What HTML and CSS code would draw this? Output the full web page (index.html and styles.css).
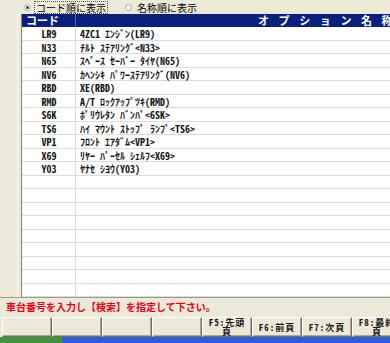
FILE: index.html
```html
<!DOCTYPE html>
<html lang="ja">
<head>
    <meta charset="UTF-8">
    <title>オプション一覧</title>
    <link rel="stylesheet" href="styles.css">
</head>
<body>
    <div class="app">
        <div class="options">
            <label class="radio">
                <span class="radio-dot checked"></span>
                <span class="radio-text focus">コード順に表示</span>
            </label>
            <label class="radio">
                <span class="radio-dot"></span>
                <span class="radio-text">名称順に表示</span>
            </label>
        </div>

        <div class="main">
            <div class="side"></div>
            <div class="grid">
                <div class="grid-head">
                    <div class="cell code">コード</div>
                    <div class="cell name">オプション名称</div>
                </div>
                <div class="grid-body">
                    <div class="row"><div class="cell code">LR9</div><div class="cell name">4ZC1 ｴﾝｼﾞﾝ(LR9)</div></div>
                    <div class="row"><div class="cell code">N33</div><div class="cell name">ﾁﾙﾄ ｽﾃｱﾘﾝｸﾞ&lt;N33&gt;</div></div>
                    <div class="row"><div class="cell code">N65</div><div class="cell name">ｽﾍﾟｰｽ ｾｰﾊﾞｰ ﾀｲﾔ(N65)</div></div>
                    <div class="row"><div class="cell code">NV6</div><div class="cell name">ｶﾍﾝｼｷ ﾊﾟﾜｰｽﾃｱﾘﾝｸﾞ(NV6)</div></div>
                    <div class="row"><div class="cell code">RBD</div><div class="cell name">XE(RBD)</div></div>
                    <div class="row"><div class="cell code">RMD</div><div class="cell name">A/T ﾛｯｸｱｯﾌﾟﾂｷ(RMD)</div></div>
                    <div class="row"><div class="cell code">S6K</div><div class="cell name">ﾎﾟﾘｳﾚﾀﾝ ﾊﾞﾝﾊﾟ&lt;6SK&gt;</div></div>
                    <div class="row"><div class="cell code">TS6</div><div class="cell name">ﾊｲ ﾏｳﾝﾄ ｽﾄｯﾌﾟ ﾗﾝﾌﾟ&lt;TS6&gt;</div></div>
                    <div class="row"><div class="cell code">VP1</div><div class="cell name">ﾌﾛﾝﾄ ｴｱﾀﾞﾑ&lt;VP1&gt;</div></div>
                    <div class="row"><div class="cell code">X69</div><div class="cell name">ﾘﾔｰ ﾊﾟｰｾﾙ ｼｪﾙﾌ&lt;X69&gt;</div></div>
                    <div class="row"><div class="cell code">Y03</div><div class="cell name">ﾔﾅｾ ｼﾖｳ(Y03)</div></div>
                    <div class="row"><div class="cell code"></div><div class="cell name"></div></div>
                    <div class="row"><div class="cell code"></div><div class="cell name"></div></div>
                    <div class="row"><div class="cell code"></div><div class="cell name"></div></div>
                    <div class="row"><div class="cell code"></div><div class="cell name"></div></div>
                    <div class="row"><div class="cell code"></div><div class="cell name"></div></div>
                    <div class="row"><div class="cell code"></div><div class="cell name"></div></div>
                    <div class="row"><div class="cell code"></div><div class="cell name"></div></div>
                    <div class="row"><div class="cell code"></div><div class="cell name"></div></div>
                    <div class="row"><div class="cell code"></div><div class="cell name"></div></div>
                </div>
            </div>
        </div>

        <div class="status">車台番号を入力し【検索】を指定して下さい。</div>

        <div class="fkeys">
            <button class="fkey"></button>
            <button class="fkey"></button>
            <button class="fkey"></button>
            <button class="fkey"></button>
            <button class="fkey">F5:先頭<br>頁</button>
            <button class="fkey">F6:前頁</button>
            <button class="fkey">F7:次頁</button>
            <button class="fkey">F8:最終<br>頁</button>
        </div>

        <div class="taskbar">
            <div class="start"></div>
        </div>
    </div>
</body>
</html>
```

FILE: styles.css
```css
:root {
    --face: #ece9d8;
    --head: #0b1f7c;
    --line: #dcdcdc;
    --mono: "Noto Sans Mono CJK JP", "Noto Sans CJK JP", monospace;
    --ui: "Noto Sans CJK JP", sans-serif;
}

* {
    margin: 0;
    padding: 0;
    box-sizing: border-box;
}

body {
    background-color: var(--face);
    font-family: var(--ui);
    overflow: hidden;
}

.app {
    width: 390px;
    height: 343px;
    display: flex;
    flex-direction: column;
    overflow: hidden;
}

/* radio row */
.options {
    height: 14px;
    display: flex;
    align-items: center;
    padding: 1px 0 0 24px;
    gap: 17px;
}

.radio {
    display: flex;
    align-items: center;
    gap: 3px;
    font-size: 10px;
    line-height: 11px;
    color: #000;
}

.radio-dot {
    width: 7px;
    height: 7px;
    border-radius: 50%;
    background: #fff;
    border: 1px solid #a8a8a8;
    display: flex;
    align-items: center;
    justify-content: center;
}

.radio-dot.checked::after {
    content: "";
    width: 3px;
    height: 3px;
    border-radius: 50%;
    background: #333;
}

.radio-text {
    padding: 0 1px;
    border: 1px dotted transparent;
}

.radio-text.focus {
    border-color: #555;
}

/* list */
.main {
    flex: 1;
    display: flex;
    min-height: 0;
}

.side {
    width: 22px;
    flex-shrink: 0;
    border-right: 1px solid #8a887c;
}

.side::before {
    content: "";
    display: block;
    width: 17px;
    height: 100%;
    border-right: 1px solid #f8f7f0;
}

.grid {
    flex: 1;
    min-width: 0;
    background: #fff;
}

.grid-head,
.row {
    display: grid;
    grid-template-columns: 54px 1fr;
}

.grid-head {
    height: 13px;
    background: var(--head);
    color: #fff;
    font-family: var(--ui);
    font-size: 11px;
    font-weight: 700;
    line-height: 13px;
    white-space: nowrap;
}

.grid-head .code {
    padding-left: 4px;
    border-right: 1px solid #5a66a8;
}

.grid-head .name {
    padding-left: 182px;
    letter-spacing: 9.6px;
    overflow-x: clip;
}

.row {
    height: 13.5px;
    border-bottom: 1px solid var(--line);
    font-family: var(--mono);
    font-size: 10px;
    font-weight: 700;
    line-height: 13px;
    color: #151515;
    white-space: nowrap;
}

.row .code {
    text-align: center;
    border-right: 1px solid var(--line);
    padding-left: 1px;
}

.row .name {
    padding-left: 4px;
}

/* status line */
.status {
    height: 20px;
    border-top: 1px solid #9c9a8e;
    padding: 3px 0 0 6px;
    color: #e5001f;
    font-family: var(--ui);
    font-size: 10px;
    font-weight: 700;
    line-height: 12px;
    white-space: nowrap;
}

/* function key buttons */
.fkeys {
    height: 20px;
    display: flex;
    padding-left: 2px;
}

.fkey {
    width: 50px;
    height: 20px;
    flex-shrink: 0;
    background: var(--face);
    border: 1px solid;
    border-color: #fff #716f64 #716f64 #fff;
    box-shadow: inset -1px -1px 0 #aca899;
    font-family: var(--mono);
    font-size: 9px;
    font-weight: 700;
    line-height: 9px;
    letter-spacing: 1px;
    color: #1a1a1a;
    text-align: center;
}

/* desktop taskbar peeking below */
.taskbar {
    height: 6px;
    background: #2b5fd9;
    display: flex;
}

.start {
    width: 62px;
    background: #3c963c;
}
```
